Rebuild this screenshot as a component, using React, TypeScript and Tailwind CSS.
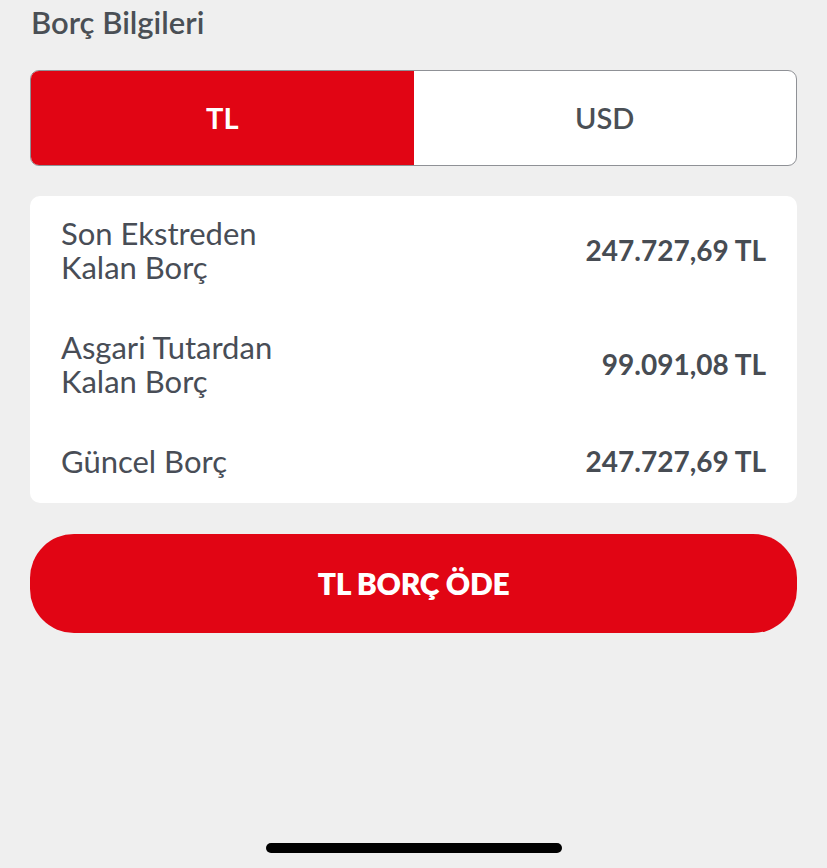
import React from "react";

const rows = [
  { label: ["Son Ekstreden", "Kalan Borç"], value: "247.727,69 TL" },
  { label: ["Asgari Tutardan", "Kalan Borç"], value: "99.091,08 TL" },
  { label: ["Güncel Borç"], value: "247.727,69 TL" },
];

export default function App() {
  return (
    <div className="relative h-[868px] w-full overflow-hidden bg-[#efefef] px-[30px] font-['Lato',sans-serif] text-[#484d56]">
      <h1 className="pl-px pt-[4px] text-[31px] font-semibold leading-[36px] text-[#4a4f55]">Borç Bilgileri</h1>

      <div className="mt-[30px] flex h-[96px] overflow-hidden rounded-[9px] border border-[#8f9196] bg-white">
        <button className="flex flex-1 items-center justify-center bg-[#e10514] text-[29px] font-bold text-white">TL</button>
        <button className="flex flex-1 items-center justify-center text-[29px] font-semibold text-[#4a4f55]">USD</button>
      </div>

      <div className="mt-[30px] flex flex-col gap-[46px] rounded-[10px] bg-white px-[31px] pb-[25px] pt-[20px]">
        {rows.map((r, i) => (
          <div key={i} className="flex items-center justify-between">
            <div className="text-[31px] leading-[34px]">
              {r.label.map((l) => (
                <div key={l}>{l}</div>
              ))}
            </div>
            <div className="text-[28px] font-bold leading-[34px] text-[#474c53]">{r.value}</div>
          </div>
        ))}
      </div>

      <button className="mt-[31px] flex h-[99px] w-full items-center justify-center rounded-[44px] bg-[#e10514] text-[30px] font-extrabold tracking-[-0.3px] text-white">
        TL BORÇ ÖDE
      </button>

      <div className="absolute bottom-[15px] left-1/2 h-[10px] w-[296px] -translate-x-1/2 rounded-full bg-black" />
    </div>
  );
}
